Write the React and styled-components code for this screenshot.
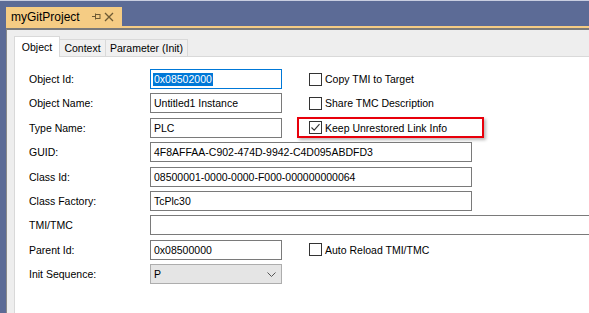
import React from "react";
import styled, { createGlobalStyle } from "styled-components";

const Global = createGlobalStyle`
  html, body { margin: 0; padding: 0; }
  body { font-family: "Liberation Sans", Arial, sans-serif; background: #5c6b96; }
`;

const Frame = styled.div`
  width: 589px;
  height: 313px;
  overflow: hidden;
  box-sizing: border-box;
  background: #5c6b96;
  border-top: 1px solid #c9cee0;
  padding-left: 6px;
  display: flex;
  flex-direction: column;
`;

const TitleRow = styled.div`
  margin-top: 6px;
  height: 19px;
  display: flex;
  align-items: stretch;
`;

const DocTab = styled.div`
  width: 116px;
  background: #f5cc84;
  display: flex;
  align-items: center;
  padding-left: 5px;
  box-sizing: border-box;
  font-size: 12px;
  color: #000;
  gap: 0;
`;

const DocTitle = styled.span`
  width: 79px;
  white-space: nowrap;
`;

const IconBox = styled.span`
  display: inline-flex;
  align-items: center;
  justify-content: center;
  width: ${(p) => p.$w}px;
  height: 19px;
`;

const Accent = styled.div`
  height: 2px;
  background: #f5cc84;
`;

const Panel = styled.div`
  flex: 1;
  background: #eeeeee;
  border-top: 2px solid #7a7a7a;
  border-left: 1px solid #8a8a8a;
  padding-left: 7px;
  display: flex;
  flex-direction: column;
`;

const TabStrip = styled.div`
  height: 27px;
  display: flex;
  align-items: flex-end;
  position: relative;
  z-index: 1;
  margin-bottom: -1px;
`;

const Tab = styled.div`
  box-sizing: border-box;
  height: ${(p) => (p.$active ? 21 : 18)}px;
  width: ${(p) => p.$w}px;
  background: ${(p) => (p.$active ? "#ffffff" : "#f0f0f0")};
  border: 1px solid #d9d9d9;
  border-bottom: ${(p) => (p.$active ? "none" : "1px solid #d9d9d9")};
  border-left: ${(p) => (p.$first ? "1px solid #d9d9d9" : "none")};
  font-size: 10.5px;
  color: #000;
  display: flex;
  align-items: center;
  justify-content: center;
  padding-bottom: ${(p) => (p.$active ? 1 : 0)}px;
`;

const Content = styled.div`
  flex: 1;
  background: #ffffff;
  border-top: 1px solid #d9d9d9;
  border-left: 1px solid #d9d9d9;
  padding: 12px 0 0 14px;
`;

const Form = styled.div`
  display: grid;
  grid-template-columns: 121px 132px max-content;
  grid-auto-rows: 20px;
  row-gap: 4.375px;
  align-items: center;
`;

const Label = styled.div`
  grid-column: 1;
  font-size: 10.5px;
  color: #000;
  white-space: nowrap;
`;

const Field = styled.div`
  grid-column: ${(p) => (p.$span ? "2 / span 2" : "2")};
  box-sizing: border-box;
  height: 20px;
  width: ${(p) => p.$w || 132}px;
  border: 1px solid ${(p) => (p.$focus ? "#0078d7" : "#7a7a7a")};
  background: #fff;
  display: flex;
  align-items: center;
  padding-left: 3px;
  font-size: 10.5px;
  color: #000;
  white-space: nowrap;
`;

const Selected = styled.span`
  background: #0078d7;
  color: #fff;
  line-height: 13px;
  padding: 0 1px;
  margin-left: -1px;
`;

const Combo = styled.div`
  grid-column: 2;
  box-sizing: border-box;
  height: 20px;
  width: 132px;
  border: 1px solid #adadad;
  background: #e5e5e5;
  display: flex;
  align-items: center;
  justify-content: space-between;
  padding: 0 5px 0 3px;
  font-size: 10.5px;
  color: #000;
`;

const CheckCell = styled.div`
  grid-column: 3;
  display: flex;
  align-items: center;
  gap: 3px;
  padding-left: 27px;
  font-size: 10.5px;
  color: #000;
  white-space: nowrap;
`;

const Highlight = styled.div`
  grid-column: 3;
  box-sizing: border-box;
  margin-left: 15px;
  width: 187px;
  height: 21px;
  border: 2px solid #e8000b;
  box-shadow: 2px 2px 3px rgba(0, 0, 0, 0.28);
  display: flex;
  align-items: center;
  gap: 3px;
  padding-left: 10px;
  font-size: 10.5px;
  color: #000;
  white-space: nowrap;
`;

const Box = styled.span`
  box-sizing: border-box;
  width: 13px;
  height: 13px;
  border: 1px solid #333333;
  background: #fff;
  display: inline-flex;
  align-items: center;
  justify-content: center;
  flex: none;
`;

const Check = ({ checked, children }) => (
  <>
    <Box>
      {checked && (
        <svg width="11" height="11" viewBox="0 0 11 11">
          <path d="M1.5 5.5 L4.2 8.2 L9.5 2.2" fill="none" stroke="#333" strokeWidth="1.1" />
        </svg>
      )}
    </Box>
    <span>{children}</span>
  </>
);

export default function App() {
  return (
    <>
      <Global />
      <Frame>
        <TitleRow>
          <DocTab>
            <DocTitle>myGitProject</DocTitle>
            <IconBox $w={12}>
              <svg width="9" height="7" viewBox="0 0 9 7">
                <path d="M0 3.5 H3 M3.5 0.5 V6.5" stroke="#6e5a33" strokeWidth="1" fill="none" />
                <rect x="3.5" y="1.5" width="4.5" height="4" fill="none" stroke="#6e5a33" strokeWidth="1" />
              </svg>
            </IconBox>
            <IconBox $w={14}>
              <svg width="10" height="10" viewBox="0 0 10 10">
                <path d="M1 1 L9 9 M9 1 L1 9" stroke="#6e5a33" strokeWidth="1.3" fill="none" />
              </svg>
            </IconBox>
          </DocTab>
        </TitleRow>
        <Accent />
        <Panel>
          <TabStrip>
            <Tab $active $first $w={46}>Object</Tab>
            <Tab $w={46}>Context</Tab>
            <Tab $w={82}>Parameter (Init)</Tab>
          </TabStrip>
          <Content>
            <Form>
              <Label>Object Id:</Label>
              <Field $focus>
                <Selected>0x08502000</Selected>
              </Field>
              <CheckCell>
                <Check>Copy TMI to Target</Check>
              </CheckCell>

              <Label>Object Name:</Label>
              <Field>Untitled1 Instance</Field>
              <CheckCell>
                <Check>Share TMC Description</Check>
              </CheckCell>

              <Label>Type Name:</Label>
              <Field>PLC</Field>
              <Highlight>
                <Check checked>Keep Unrestored Link Info</Check>
              </Highlight>

              <Label>GUID:</Label>
              <Field $span $w={322}>4F8AFFAA-C902-474D-9942-C4D095ABDFD3</Field>

              <Label>Class Id:</Label>
              <Field $span $w={322}>08500001-0000-0000-F000-000000000064</Field>

              <Label>Class Factory:</Label>
              <Field $span $w={322}>TcPlc30</Field>

              <Label>TMI/TMC</Label>
              <Field $span $w={600}></Field>

              <Label>Parent Id:</Label>
              <Field>0x08500000</Field>
              <CheckCell>
                <Check>Auto Reload TMI/TMC</Check>
              </CheckCell>

              <Label>Init Sequence:</Label>
              <Combo>
                <span>P</span>
                <svg width="9" height="5" viewBox="0 0 9 5">
                  <path d="M0.5 0.5 L4.5 4.5 L8.5 0.5" fill="none" stroke="#555" strokeWidth="1" />
                </svg>
              </Combo>
            </Form>
          </Content>
        </Panel>
      </Frame>
    </>
  );
}
